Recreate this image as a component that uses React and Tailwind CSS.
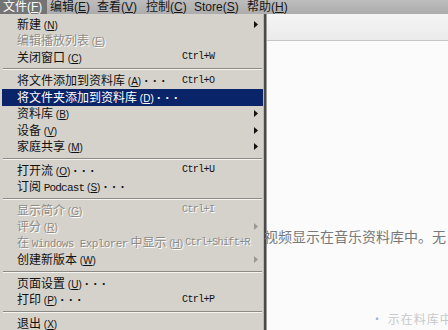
import React from 'react';

const bar = [
  { t: '文件', k: 'F', w: 'w-[47px]', active: true },
  { t: '编辑', k: 'E', w: 'w-[47px]' },
  { t: '查看', k: 'V', w: 'w-[49px]' },
  { t: '控制', k: 'C', w: 'w-[48px]' },
  { t: 'Store', k: 'S', w: 'w-[53px]' },
  { t: '帮助', k: 'H', w: 'w-[50px]' },
];

const menu = [
  { label: '新建', k: 'N', arrow: true },
  { label: '编辑播放列表', k: 'E', disabled: true },
  { label: '关闭窗口', k: 'C', shortcut: 'Ctrl+W' },
  'sep',
  { label: '将文件添加到资料库', k: 'A', dots: true, shortcut: 'Ctrl+O' },
  { label: '将文件夹添加到资料库', k: 'D', dots: true, active: true },
  { label: '资料库', k: 'B', arrow: true },
  { label: '设备', k: 'V', arrow: true },
  { label: '家庭共享', k: 'M', arrow: true },
  'sep',
  { label: '打开流', k: 'O', dots: true, shortcut: 'Ctrl+U' },
  { label: <>订阅 <span className="font-['Liberation_Mono',monospace] text-[11px] tracking-[-0.8px]">Podcast</span></>, k: 'S', dots: true },
  'sep',
  { label: '显示简介', k: 'G', disabled: true, shortcut: 'Ctrl+I' },
  { label: '评分', k: 'R', disabled: true, arrow: true },
  {
    label: <>在 <span className="font-['Liberation_Mono',monospace] text-[11px] tracking-[-0.6px]">Windows Explorer</span> 中显示</>,
    k: 'H',
    disabled: true,
    shortcut: 'Ctrl+Shift+R',
  },
  { label: '创建新版本', k: 'W', arrow: true, arrowDisabled: true },
  'sep',
  { label: '页面设置', k: 'U', dots: true },
  { label: '打印', k: 'P', dots: true, shortcut: 'Ctrl+P' },
  'sep',
  { label: '退出', k: 'X' },
];

function Arrow({ color }) {
  return (
    <svg width="4" height="7" viewBox="0 0 4 7" className="shrink-0">
      <path d="M0 0 L4 3.5 L0 7 Z" fill={color} />
    </svg>
  );
}

function Item({ item }) {
  const { label, k, dots, shortcut, arrow, arrowDisabled, disabled, active } = item;
  const tone = active
    ? 'bg-[#0a246a] text-white'
    : disabled
      ? 'text-[#8d8b86] [text-shadow:1px_1px_0_#ffffff]'
      : 'text-[#111111]';
  return (
    <div className={`flex items-center h-[16.5px] pl-[15px] pr-[5px] ${tone}`}>
      <span className="min-w-[163px] shrink-0 whitespace-nowrap text-[12px] leading-none">
        {label}
        <span className="font-['Liberation_Sans',sans-serif] text-[10px]">
          {' '}(<span className="underline">{k}</span>)
        </span>
        {dots && <span className="text-[10px] tracking-[-1.5px]">···</span>}
      </span>
      <span className="flex-1 pl-[2px] whitespace-nowrap font-['Liberation_Mono',monospace] text-[10px] tracking-[-0.6px] leading-none">
        {shortcut}
      </span>
      {arrow && <Arrow color={arrowDisabled || disabled ? '#9a9892' : active ? '#ffffff' : '#111111'} />}
    </div>
  );
}

export default function App() {
  return (
    <div className="w-[448px] h-[330px] overflow-hidden bg-[#fbfbfb] font-['Liberation_Sans','Noto_Sans_CJK_SC',sans-serif]">
      <div className="flex h-[14px] bg-gradient-to-b from-[#bdbdbd] to-[#acacac] text-[12px] leading-none">
        {bar.map((b) => (
          <div
            key={b.k}
            className={`${b.w} flex items-center pl-[3px] whitespace-nowrap ${b.active ? 'bg-[#747474] text-white' : 'text-[#161616]'}`}
          >
            {b.t}(<span className="underline">{b.k}</span>)
          </div>
        ))}
      </div>
      <div className="flex h-[316px]">
        <div className="w-[267px] shrink-0 flex">
          <div className="flex-1 bg-[#d5d2cc] pt-[2px] pl-[2px] font-['Noto_Sans_CJK_SC',sans-serif]">
            {menu.map((m, i) =>
              m === 'sep' ? (
                <div key={i} className="h-[7px] flex flex-col justify-center px-[1px]">
                  <div className="border-t border-[#8c8a85]" />
                  <div className="border-t border-[#f5f4f1]" />
                </div>
              ) : (
                <Item key={i} item={m} />
              )
            )}
          </div>
          <div className="w-[1px] bg-[#b9b7b2]" />
          <div className="w-[2px] bg-[#4a4a4a]" />
          <div className="w-[1px] bg-[#9a9a9a]" />
        </div>
        <div className="flex-1 min-w-0 flex flex-col">
          <div className="h-[27px] bg-gradient-to-b from-[#f4f4f4] to-[#ebebeb] border-b border-[#c6c6c6]" />
          <div className="mt-[187px] whitespace-nowrap overflow-hidden text-[14px] leading-[16px] text-[#787878] font-['Noto_Sans_CJK_SC',sans-serif] -ml-[3px]">
            视频显示在音乐资料库中。无
          </div>
          <div className="mt-[67px] pl-[104px] whitespace-nowrap text-[12px] leading-[16px] text-[#c9c9c9] tracking-[1px] font-['Noto_Sans_CJK_SC',sans-serif]">
            <span className="text-[#9fb4d6]">·</span> 示在料库中
          </div>
        </div>
      </div>
    </div>
  );
}
